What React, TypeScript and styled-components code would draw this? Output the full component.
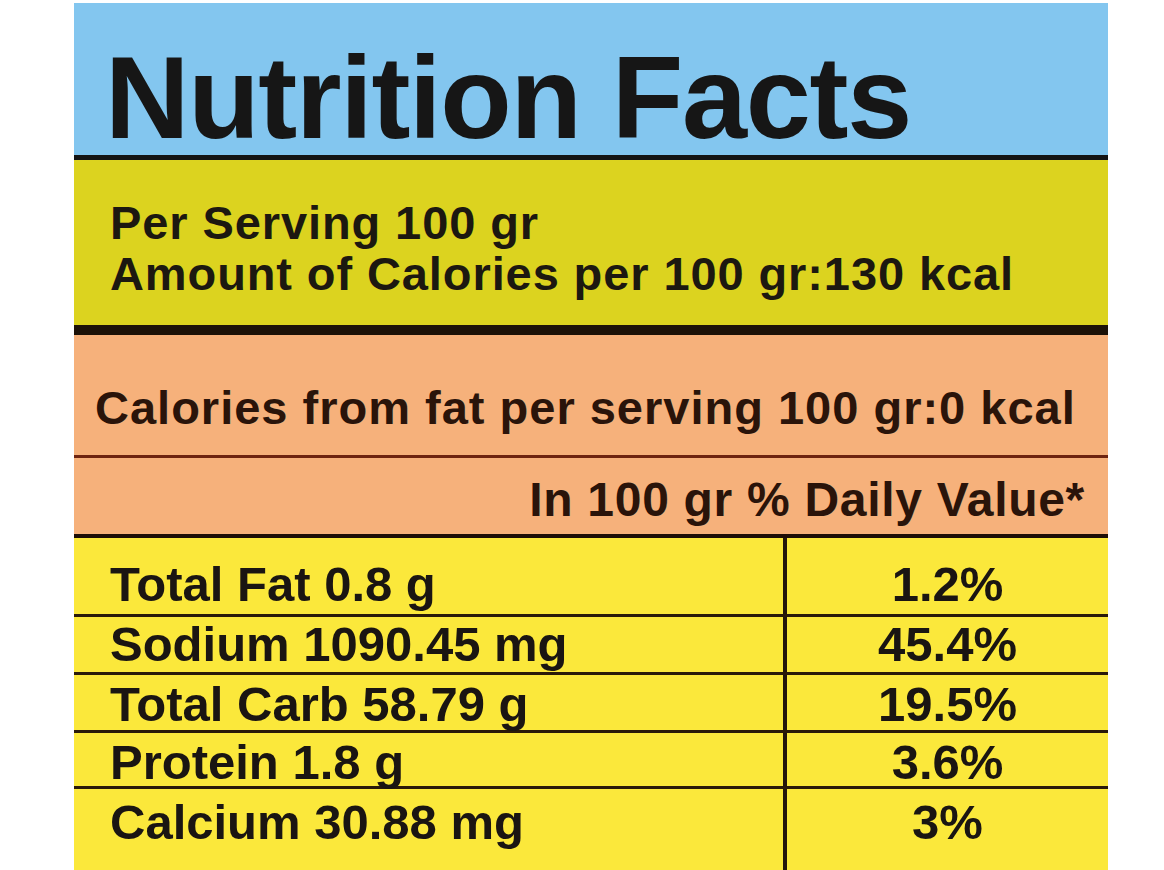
import styled, { createGlobalStyle } from "styled-components";

const GlobalStyle = createGlobalStyle`
  html, body {
    margin: 0;
    padding: 0;
    background: #ffffff;
    overflow: hidden;
  }
  body {
    font-family: "Liberation Sans", Arial, sans-serif;
    font-weight: 700;
    color: #1a1512;
  }
`;

const Label = styled.div`
  width: 1034px;
  margin: 3px 0 0 74px;
`;

const TitleBand = styled.div`
  box-sizing: border-box;
  height: 157px;
  padding: 36px 0 0 31px;
  background: #83c6ef;
  border-bottom: 5px solid #141414;
`;

const Title = styled.h1`
  margin: 0;
  font-size: 117px;
  line-height: 117px;
  font-weight: 700;
  letter-spacing: -1.3px;
  color: #161616;
`;

const ServingBand = styled.div`
  padding: 37px 33px 26px 36px;
  background: #dcd31f;
  border-bottom: 10px solid #1c1208;
`;

const ServingLine = styled.div`
  font-size: 47px;
  line-height: 51px;
  letter-spacing: 0.9px;
  color: #1c1810;
`;

const CaloriesBand = styled.div`
  background: #f6b17b;
  color: #2a140a;
`;

const FatLine = styled.div`
  padding: 49px 19px 24px 21px;
  font-size: 47px;
  line-height: 47px;
  letter-spacing: 1px;
  border-bottom: 3px solid #6e2410;
`;

const DailyLine = styled.div`
  padding: 18px 23px 10px;
  font-size: 48px;
  line-height: 48px;
  letter-spacing: 0.7px;
  text-align: right;
  border-bottom: 4px solid #1e0e06;
`;

const Table = styled.div`
  background: #fbe83b;
`;

const Row = styled.div<{ $h: number; $last?: boolean }>`
  box-sizing: border-box;
  display: grid;
  grid-template-columns: 713px 1fr;
  height: ${(p) => p.$h}px;
  border-bottom: ${(p) => (p.$last ? "none" : "3px solid #2a1a08")};
`;

const NameCell = styled.div<{ $pt: number }>`
  padding: ${(p) => p.$pt}px 0 0 36px;
  font-size: 49px;
  line-height: 49px;
  border-right: 4px solid #24160a;
  white-space: nowrap;
`;

const ValueCell = styled.div<{ $pt: number }>`
  padding-top: ${(p) => p.$pt}px;
  font-size: 49px;
  line-height: 49px;
  text-align: center;
`;

const nutrients = [
  { name: "Total Fat 0.8 g", value: "1.2%", h: 79, pt: 22 },
  { name: "Sodium 1090.45 mg", value: "45.4%", h: 58, pt: 3 },
  { name: "Total Carb 58.79 g", value: "19.5%", h: 58, pt: 5 },
  { name: "Protein 1.8 g", value: "3.6%", h: 56, pt: 5 },
  { name: "Calcium 30.88 mg", value: "3%", h: 100, pt: 9 },
];

function App() {
  return (
    <>
      <GlobalStyle />
      <Label>
        <TitleBand>
          <Title>Nutrition Facts</Title>
        </TitleBand>
        <ServingBand>
          <ServingLine>Per Serving 100 gr</ServingLine>
          <ServingLine>Amount of Calories per 100 gr:130 kcal</ServingLine>
        </ServingBand>
        <CaloriesBand>
          <FatLine>Calories from fat per serving 100 gr:0 kcal</FatLine>
          <DailyLine>In 100 gr % Daily Value*</DailyLine>
        </CaloriesBand>
        <Table>
          {nutrients.map((n, i) => (
            <Row key={n.name} $h={n.h} $last={i === nutrients.length - 1}>
              <NameCell $pt={n.pt}>{n.name}</NameCell>
              <ValueCell $pt={n.pt}>{n.value}</ValueCell>
            </Row>
          ))}
        </Table>
      </Label>
    </>
  );
}

export default App;
